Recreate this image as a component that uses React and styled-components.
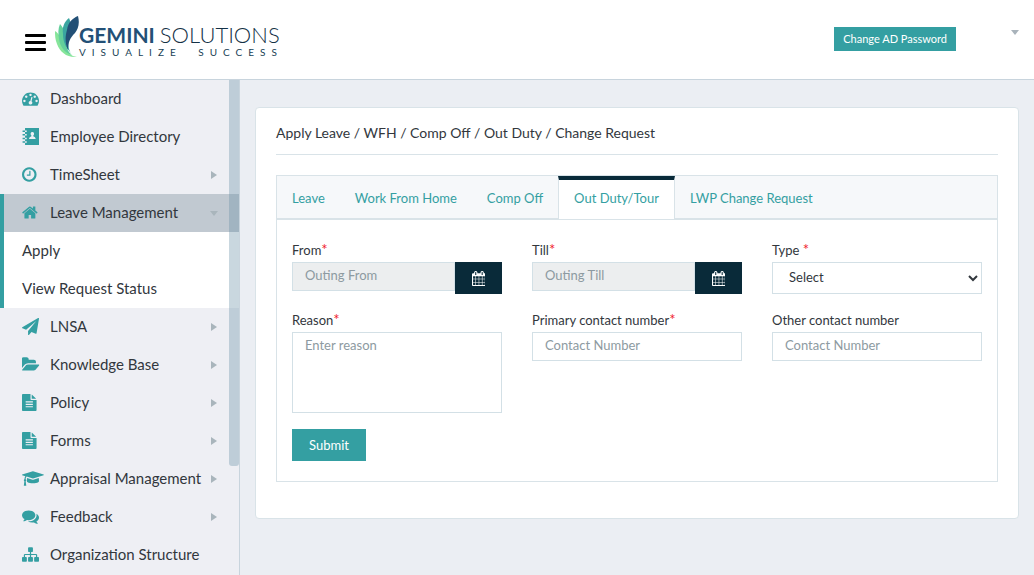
import React from "react";
import styled, { createGlobalStyle, css } from "styled-components";

const teal = "#349fa2";
const navy = "#092a39";
const line = "#d9e3e8";

const GlobalStyle = createGlobalStyle`
  *, *::before, *::after { box-sizing: border-box; }
  body {
    margin: 0;
    background: #ebeef3;
    color: #32373d;
    font: 13px/20px Lato, "Liberation Sans", sans-serif;
  }
  button, input, select, textarea { font: inherit; color: inherit; }
  #root { min-height: 100vh; display: flex; flex-direction: column; }
`;

/* ---------- Header ---------- */

const Header = styled.header`
  display: flex;
  align-items: center;
  height: 80px;
  padding: 0 15px 0 25px;
  background: #fff;
  border-bottom: 1px solid #c8d4dd;
`;

const MenuToggle = styled.button`
  display: flex;
  flex-direction: column;
  gap: 4px;
  width: 21px;
  margin-top: 6px;
  padding: 0;
  border: 0;
  background: none;
`;

const MenuBar = styled.span`
  height: 3px;
  border-radius: 1px;
  background: #000;
`;

const Brand = styled.a`
  display: flex;
  align-items: flex-start;
  height: 46px;
  margin: 0 auto 2px 9px;
  text-decoration: none;
`;

const BrandText = styled.span`
  display: flex;
  flex-direction: column;
  padding-top: 8px;
`;

const BrandName = styled.span`
  display: flex;
  align-items: baseline;
  gap: 5px;
  font-size: 22px;
  line-height: 22px;
  color: #143146;
  white-space: nowrap;
  font-weight: 300;

  strong { font-size: 21px; font-weight: 700; color: #235076; }
`;

const BrandTagline = styled.span`
  font-size: 10px;
  line-height: 12px;
  letter-spacing: 6px;
  word-spacing: 8px;
  color: #203f55;
  white-space: nowrap;
`;

const PasswordButton = styled.button`
  height: 24px;
  margin-bottom: 2px;
  padding: 0 9px;
  border: 0;
  background: ${teal};
  color: #fff;
  font-size: 11px;
  line-height: 24px;
  white-space: nowrap;
`;

const ProfileToggle = styled.button`
  display: flex;
  margin: 0 0 14px 55px;
  padding: 0;
  border: 0;
  background: none;
  color: #a9b3bb;
`;

const Caret = styled.span`
  width: 0;
  height: 0;
  border: solid transparent;
  ${({ $down }) =>
    $down
      ? css`border-width: 5px 4px 0; border-top-color: currentColor;`
      : css`border-width: 4px 0 4px 6px; border-left-color: currentColor;`}
`;

/* ---------- Sidebar ---------- */

const Body = styled.div`
  display: flex;
  flex: 1;
`;

const Sidebar = styled.aside`
  position: relative;
  flex: 0 0 240px;
  background: #eeeff4;
  border-right: 1px solid #c8d4dd;
`;

const ScrollThumb = styled.div`
  position: absolute;
  top: 0;
  right: 0;
  width: 10px;
  height: 386px;
  border-radius: 0 0 3px 3px;
  background: rgba(105, 143, 165, 0.36);
`;

const NavList = styled.ul`
  margin: 0;
  padding: 0;
  list-style: none;
`;

const NavLink = styled.a`
  display: flex;
  align-items: center;
  height: 38px;
  padding: 0 21px 0 22px;
  color: inherit;
  font-size: 15px;
  text-decoration: none;
  white-space: nowrap;
  ${({ $active }) =>
    $active && css`background: #c1c9d1; box-shadow: inset 4px 0 0 ${teal};`}
`;

const NavIcon = styled.span`
  display: flex;
  flex: 0 0 28px;
  padding-bottom: 1px;
  color: ${teal};
`;

const NavLabel = styled.span`
  flex: 1;
  padding-bottom: 2px;
`;

const NavCaret = styled.span`
  display: flex;
  justify-content: center;
  flex: 0 0 8px;
  color: #a9b5bc;
`;

const SubList = styled(NavList)`
  background: #fff;
  box-shadow: inset 4px 0 0 ${teal};
`;

/* ---------- Content ---------- */

const Main = styled.main`
  flex: 1;
  min-width: 0;
  padding: 27px 15px;
`;

const Card = styled.section`
  padding: 0 20px 36px;
  background: #fff;
  border: 1px solid ${line};
  border-radius: 4px;
`;

const Title = styled.h1`
  margin: 0 0 20px;
  padding: 15px 0 11px;
  border-bottom: 1px solid ${line};
  font-size: 14px;
  line-height: 20px;
  font-weight: 400;
`;

const TabBar = styled.div`
  display: flex;
  height: 44px;
  background: #f6f8fa;
  border: 1px solid ${line};
`;

const Tab = styled.button`
  padding: 2px 15px 0;
  border: 0;
  background: none;
  color: ${teal};
  white-space: nowrap;
  ${({ $active }) =>
    $active &&
    css`
      padding: 0 15px 3px;
      margin-bottom: -1px;
      background: #fff;
      border: 1px solid ${line};
      border-width: 0 1px;
      border-top: 4px solid ${navy};
    `}
`;

const Panel = styled.form`
  display: grid;
  grid-template-columns: repeat(3, minmax(0, 1fr));
  column-gap: 30px;
  padding: 20px 15px;
  border: 1px solid ${line};
`;

const Field = styled.div`
  display: flex;
  flex-direction: column;
  min-height: 70px;
`;

const Label = styled.label`
  height: 22px;
  line-height: 20px;
`;

const Required = styled.span`
  color: #f0222c;
  font-size: 15px;
  line-height: 1;
`;

const control = css`
  width: 100%;
  border: 1px solid #d3e0e6;
  border-radius: 0;
  outline: 0;
  background: #fff;
  &::placeholder { color: #8d9aa1; opacity: 1; }
`;

const TextInput = styled.input`
  ${control}
  height: 29px;
  padding: 0 12px 3px;
  &:read-only { background: #eceeef; }
`;

const TextArea = styled.textarea`
  ${control}
  height: 81px;
  padding: 2px 12px;
  resize: none;
`;

const Select = styled.select`
  ${control}
  height: 32px;
  padding: 0 0 2px 12px;
`;

const DateGroup = styled.div`
  display: flex;
`;

const DateButton = styled.button`
  display: flex;
  align-items: center;
  justify-content: center;
  flex: 0 0 47px;
  height: 32px;
  padding: 0;
  border: 0;
  background: ${navy};
  color: #fff;
`;

const SubmitButton = styled.button`
  justify-self: start;
  height: 32px;
  margin-top: 16px;
  padding: 0 17px;
  border: 0;
  background: ${teal};
  color: #fff;
`;

/* ---------- Icons ---------- */

const icons = {
  dashboard: {
    box: [0, 1792],
    d: "M384 1152q0-53-37.500-90.500t-90.500-37.500-90.500 37.500-37.500 90.500 37.500 90.500 90.500 37.500 90.500-37.500 37.500-90.500zm192-448q0-53-37.500-90.500t-90.500-37.500-90.500 37.500-37.500 90.500 37.500 90.500 90.500 37.500 90.500-37.500 37.500-90.500zm428 481l101-382q6-26-7.500-48.500t-38.500-29.500-48 6.500-30 39.500l-101 382q-60 5-107 43.500t-63 98.500q-20 77 20 146t117 89 146-20 89-117q16-60-6-117t-72-91zm660-33q0-53-37.500-90.500t-90.500-37.500-90.500 37.500-37.500 90.500 37.500 90.500 90.500 37.500 90.500-37.500 37.500-90.500zm-640-640q0-53-37.500-90.500t-90.500-37.500-90.500 37.500-37.500 90.500 37.500 90.500 90.500 37.500 90.500-37.500 37.500-90.500zm448 192q0-53-37.500-90.500t-90.500-37.500-90.500 37.500-37.500 90.500 37.500 90.500 90.500 37.500 90.500-37.500 37.500-90.500zm320 448q0 261-141 483-19 29-54 29h-1402q-35 0-54-29-141-221-141-483 0-182 71-348t191-286 286-191 348-71 348 71 286 191 191 286 71 348z",
  },
  directory: {
    box: [0, 1792],
    d: "M320 0H1792V1792H320V1560H500V1400H320V1180H500V1020H320V800H500V640H320V420H500V260H320ZM1090 420a180 200 0 0 0-100 370v90q-230 50-260 290h720q-30-240-260-290v-90a180 200 0 0 0-100-370ZM60 260H320V420H60ZM60 640H320V800H60ZM60 1020H320V1180H60ZM60 1400H320V1560H60Z",
  },
  clock: {
    box: [128, 1536],
    d: "M1024 544v448q0 14-9 23t-23 9h-320q-14 0-23-9t-9-23v-64q0-14 9-23t23-9h224v-352q0-14 9-23t23-9h64q14 0 23 9t9 23zm416 352q0-148-73-273t-198-198-273-73-273 73-198 198-73 273 73 273 198 198 273 73 273-73 198-198 73-273zm224 0q0 209-103 385.500t-279.500 279.500-385.500 103-385.500-103-279.500-279.500-103-385.500 103-385.500 279.500-279.500 385.500-103 385.500 103 279.500 279.500 103 385.500z",
  },
  home: {
    box: [64, 1664],
    d: "M1472 992v480q0 26-19 45t-45 19h-384v-384h-256v384h-384q-26 0-45-19t-19-45v-480q0-1 .5-3t.5-3l575-474 575 474q1 2 1 6zm223-69l-62 74q-8 9-21 11h-3q-13 0-21-7l-692-577-692 577q-12 8-24 7-13-2-21-11l-62-74q-8-10-7-23.500t11-21.500l719-599q32-26 76-26t76 26l244 204v-195q0-14 9-23t23-9h192q14 0 23 9t9 23v408l219 182q10 8 11 21.500t-7 23.500z",
  },
  plane: {
    box: [0, 1792],
    d: "M1764 11q33 24 27 64l-256 1536q-5 29-32 45-14 8-31 8-11 0-24-5l-453-185-242 295q-18 23-49 23-13 0-22-4-19-7-30.500-23.500t-11.500-36.500v-349l864-1059-1069 925-395-162q-37-14-40-55-2-40 32-59l1664-960q15-9 32-9 20 0 36 11z",
  },
  folder: {
    box: [0, 1856],
    d: "M1815 952q0 31-31 66l-336 396q-43 51-120.500 86.500t-143.500 35.500h-1088q-34 0-60.500-13t-26.500-43q0-31 31-66l336-396q43-51 120.500-86.500t143.500-35.500h1088q34 0 60.500 13t26.500 43zm-343-344v160h-832q-94 0-197 47.500t-164 119.500l-337 396-5 6q0-4-.5-12.500t-.5-12.500v-960q0-92 66-158t158-66h320q92 0 158 66t66 158v32h544q92 0 158 66t66 158z",
  },
  file: {
    box: [128, 1536],
    d: "M1596 476q14 14 28 36h-472v-472q22 14 36 28zm-476 164h544v1056q0 40-28 68t-68 28h-1344q-40 0-68-28t-28-68v-1600q0-40 28-68t68-28h800v544q0 40 28 68t68 28zm160 736v-64q0-14-9-23t-23-9h-704q-14 0-23 9t-9 23v64q0 14 9 23t23 9h704q14 0 23-9t9-23zm0-256v-64q0-14-9-23t-23-9h-704q-14 0-23 9t-9 23v64q0 14 9 23t23 9h704q14 0 23-9t9-23zm0-256v-64q0-14-9-23t-23-9h-704q-14 0-23 9t-9 23v64q0 14 9 23t23 9h704q14 0 23-9t9-23z",
  },
  cap: {
    box: [0, 2304],
    d: "M1774 836l18 316q4 69-82 128t-235 93.500-323 34.500-323-34.500-235-93.500-82-128l18-316 574 181q22 7 48 7t48-7zm530-324q0 23-22 31l-1120 352q-4 1-10 1t-10-1l-652-206q-43 34-71 111.500t-34 178.500q63 36 63 109 0 69-58 107l58 433q2 14-8 25-9 11-24 11h-192q-15 0-24-11-10-11-8-25l58-433q-58-38-58-107 0-73 65-111 11-207 98-330l-333-104q-22-8-22-31t22-31l1120-352q4-1 10-1t10 1l1120 352q22 8 22 31z",
  },
  comments: {
    box: [0, 1792],
    d: "M1408 768q0 139-94 257t-256.500 186.500-353.500 68.500q-86 0-176-16-124 88-278 128-36 9-86 16h-3q-11 0-20.500-8t-11.500-21q-1-3-1-6.500t.5-6.500 2-6l2.500-5 3.500-5.500 4-5 4.500-5 4-4.500q5-6 23-25t26-29.500 22.500-29 25-38.500 20.500-44q-124-72-195-177t-71-224q0-139 94-257t256.500-186.500 353.500-68.500 353.500 68.500 256.500 186.500 94 257zm384 256q0 120-71 224.500t-195 176.500q10 24 20.500 44t25 38.500 22.500 29 26 29.500 23 25q1 1 4 4.500t4.500 5 4 5 3.500 5.500l2.500 5 2 6 .5 6.500-1 6.500q-3 14-13 22t-22 7q-50-7-86-16-154-40-278-128-90 16-176 16-271 0-472-132 58 4 88 4 161 0 309-45t264-129q125-92 192-212t67-254q0-77-23-152 129 71 204 178t75 230z",
  },
  sitemap: {
    box: [0, 1792],
    d: "M1792 1248v320q0 40-28 68t-68 28h-320q-40 0-68-28t-28-68v-320q0-40 28-68t68-28h96v-192h-512v192h96q40 0 68 28t28 68v320q0 40-28 68t-68 28h-320q-40 0-68-28t-28-68v-320q0-40 28-68t68-28h96v-192h-512v192h96q40 0 68 28t28 68v320q0 40-28 68t-68 28h-320q-40 0-68-28t-28-68v-320q0-40 28-68t68-28h96v-192q0-52 38-90t90-38h512v-192h-96q-40 0-68-28t-28-68v-320q0-40 28-68t68-28h320q40 0 68 28t28 68v320q0 40-28 68t-68 28h-96v192h512q52 0 90 38t38 90v192h96q40 0 68 28t28 68z",
  },
  calendar: {
    box: [64, 1664],
    d: "M192 1664h288v-288h-288v288zm352 0h320v-288h-320v288zm-352-352h288v-320h-288v320zm352 0h320v-320h-320v320zm-352-384h288v-288h-288v288zm736 736h320v-288h-320v288zm-384-736h320v-288h-320v288zm768 736h288v-288h-288v288zm-384-352h320v-320h-320v320zm-352-864v-288q0-13-9.500-22.500t-22.500-9.500h-64q-13 0-22.500 9.500t-9.500 22.500v288q0 13 9.500 22.500t22.500 9.500h64q13 0 22.500-9.500t9.500-22.500zm736 864h288v-320h-288v320zm-384-384h320v-288h-320v288zm384 0h288v-288h-288v288zm32-480v-288q0-13-9.500-22.500t-22.500-9.500h-64q-13 0-22.500 9.500t-9.500 22.500v288q0 13 9.500 22.500t22.500 9.500h64q13 0 22.500-9.500t9.500-22.500zm384-64v1280q0 52-38 90t-90 38h-1408q-52 0-90-38t-38-90v-1280q0-52 38-90t90-38h128v-96q0-66 47-113t113-47h64q66 0 113 47t47 113v96h384v-96q0-66 47-113t113-47h64q66 0 113 47t47 113v96h128q52 0 90 38t38 90z",
  },
};

function Icon({ name, size = 17 }) {
  const { box, d } = icons[name];
  return (
    <svg
      aria-hidden="true"
      height={size}
      width={(size * box[1]) / 1792}
      viewBox={`${box[0]} 0 ${box[1]} 1792`}
      fill="currentColor"
    >
      <path fillRule={name === "directory" ? "evenodd" : "nonzero"} d={d} />
    </svg>
  );
}

function LeafMark() {
  return (
    <svg aria-hidden="true" width="24" height="42" viewBox="0 0 24 42">
      <path fill="#86e59a" d="M0 15C5 18 7 25 10 32c3 5 6 8 12 9C12 42 5 36 2 28 0 23 0 19 0 15Z" />
      <path fill="#63cf9b" d="M5 8c4 4 6 11 6 17 0 7 2 11 6 14C10 37 5 31 4 23 3 17 3 13 5 8Z" />
      <path fill="#3aa5a0" d="M14 2c3 6 1 10 0 17-1 8-1 14 2 18-5-5-8-11-8-19C7 11 9 6 14 2Z" />
      <path fill="#235076" d="M23 0c2 8 0 13-3 17-5 5-7 9-7 17-3-7-3-13-1-20C13 6 18 2 23 0Z" />
    </svg>
  );
}

/* ---------- Page ---------- */

const navigation = [
  { label: "Dashboard", icon: "dashboard" },
  { label: "Employee Directory", icon: "directory" },
  { label: "TimeSheet", icon: "clock", more: true },
  {
    label: "Leave Management",
    icon: "home",
    more: true,
    children: ["Apply", "View Request Status"],
  },
  { label: "LNSA", icon: "plane", more: true },
  { label: "Knowledge Base", icon: "folder", more: true },
  { label: "Policy", icon: "file", more: true },
  { label: "Forms", icon: "file", more: true },
  { label: "Appraisal Management", icon: "cap", more: true },
  { label: "Feedback", icon: "comments", more: true },
  { label: "Organization Structure", icon: "sitemap" },
];

const tabs = ["Leave", "Work From Home", "Comp Off", "Out Duty/Tour", "LWP Change Request"];

function DateField({ id, label, placeholder }) {
  return (
    <Field>
      <Label htmlFor={id}>{label}<Required>*</Required></Label>
      <DateGroup>
        <TextInput id={id} placeholder={placeholder} readOnly />
        <DateButton type="button" aria-label={`Choose ${placeholder}`}>
          <Icon name="calendar" size={15} />
        </DateButton>
      </DateGroup>
    </Field>
  );
}

export default function App() {
  return (
    <>
      <GlobalStyle />
      <Header>
        <MenuToggle type="button" aria-label="Toggle menu">
          <MenuBar /><MenuBar /><MenuBar />
        </MenuToggle>
        <Brand href="#">
          <LeafMark />
          <BrandText>
            <BrandName><strong>GEMINI</strong> <span>SOLUTIONS</span></BrandName>
            <BrandTagline>VISUALIZE SUCCESS</BrandTagline>
          </BrandText>
        </Brand>
        <PasswordButton type="button">Change AD Password</PasswordButton>
        <ProfileToggle type="button" aria-label="Profile menu"><Caret $down /></ProfileToggle>
      </Header>
      <Body>
        <Sidebar>
          <NavList>
            {navigation.map(({ label, icon, more, children }) => (
              <li key={label}>
                <NavLink href="#" $active={Boolean(children)}>
                  <NavIcon><Icon name={icon} /></NavIcon>
                  <NavLabel>{label}</NavLabel>
                  {more && <NavCaret><Caret $down={Boolean(children)} /></NavCaret>}
                </NavLink>
                {children && (
                  <SubList>
                    {children.map((child) => (
                      <li key={child}><NavLink href="#"><NavLabel>{child}</NavLabel></NavLink></li>
                    ))}
                  </SubList>
                )}
              </li>
            ))}
          </NavList>
          <ScrollThumb />
        </Sidebar>
        <Main>
          <Card>
            <Title>Apply Leave / WFH / Comp Off / Out Duty / Change Request</Title>
            <TabBar role="tablist">
              {tabs.map((tab) => (
                <Tab
                  key={tab}
                  type="button"
                  role="tab"
                  aria-selected={tab === "Out Duty/Tour"}
                  $active={tab === "Out Duty/Tour"}
                >
                  {tab}
                </Tab>
              ))}
            </TabBar>
            <Panel>
              <DateField id="from" label="From" placeholder="Outing From" />
              <DateField id="till" label="Till" placeholder="Outing Till" />
              <Field>
                <Label htmlFor="type">Type <Required>*</Required></Label>
                <Select id="type"><option>Select</option></Select>
              </Field>
              <Field>
                <Label htmlFor="reason">Reason<Required>*</Required></Label>
                <TextArea id="reason" placeholder="Enter reason" />
              </Field>
              <Field>
                <Label htmlFor="primary">Primary contact number<Required>*</Required></Label>
                <TextInput id="primary" placeholder="Contact Number" />
              </Field>
              <Field>
                <Label htmlFor="other">Other contact number</Label>
                <TextInput id="other" placeholder="Contact Number" />
              </Field>
              <SubmitButton type="button">Submit</SubmitButton>
            </Panel>
          </Card>
        </Main>
      </Body>
    </>
  );
}
